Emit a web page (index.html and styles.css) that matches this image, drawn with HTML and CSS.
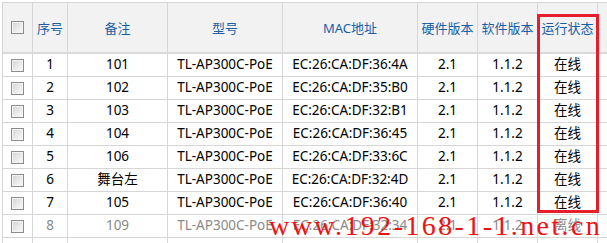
FILE: index.html
```html
<!DOCTYPE html>
<html lang="zh">
<head>
<meta charset="utf-8">
<title>AP列表</title>
<link rel="stylesheet" href="styles.css">
</head>
<body>
<div class="wrap">
  <div class="grid">
    <div class="row head">
      <div class="cell"><span class="cb"></span></div>
      <div class="cell">序号</div>
      <div class="cell">备注</div>
      <div class="cell">型号</div>
      <div class="cell">MAC地址</div>
      <div class="cell">硬件版本</div>
      <div class="cell">软件版本</div>
      <div class="cell">运行状态</div>
      <div class="cell"></div>
    </div>
    <div class="row">
      <div class="cell"><span class="cb"></span></div>
      <div class="cell">1</div><div class="cell">101</div><div class="cell">TL-AP300C-PoE</div><div class="cell">EC:26:CA:DF:36:4A</div><div class="cell">2.1</div><div class="cell">1.1.2</div><div class="cell">在线</div><div class="cell"></div>
    </div>
    <div class="row">
      <div class="cell"><span class="cb"></span></div>
      <div class="cell">2</div><div class="cell">102</div><div class="cell">TL-AP300C-PoE</div><div class="cell">EC:26:CA:DF:35:B0</div><div class="cell">2.1</div><div class="cell">1.1.2</div><div class="cell">在线</div><div class="cell"></div>
    </div>
    <div class="row">
      <div class="cell"><span class="cb"></span></div>
      <div class="cell">3</div><div class="cell">103</div><div class="cell">TL-AP300C-PoE</div><div class="cell">EC:26:CA:DF:32:B1</div><div class="cell">2.1</div><div class="cell">1.1.2</div><div class="cell">在线</div><div class="cell"></div>
    </div>
    <div class="row">
      <div class="cell"><span class="cb"></span></div>
      <div class="cell">4</div><div class="cell">104</div><div class="cell">TL-AP300C-PoE</div><div class="cell">EC:26:CA:DF:36:45</div><div class="cell">2.1</div><div class="cell">1.1.2</div><div class="cell">在线</div><div class="cell"></div>
    </div>
    <div class="row">
      <div class="cell"><span class="cb"></span></div>
      <div class="cell">5</div><div class="cell">106</div><div class="cell">TL-AP300C-PoE</div><div class="cell">EC:26:CA:DF:33:6C</div><div class="cell">2.1</div><div class="cell">1.1.2</div><div class="cell">在线</div><div class="cell"></div>
    </div>
    <div class="row">
      <div class="cell"><span class="cb"></span></div>
      <div class="cell">6</div><div class="cell">舞台左</div><div class="cell">TL-AP300C-PoE</div><div class="cell">EC:26:CA:DF:32:4D</div><div class="cell">2.1</div><div class="cell">1.1.2</div><div class="cell">在线</div><div class="cell"></div>
    </div>
    <div class="row">
      <div class="cell"><span class="cb"></span></div>
      <div class="cell">7</div><div class="cell">105</div><div class="cell">TL-AP300C-PoE</div><div class="cell">EC:26:CA:DF:36:40</div><div class="cell">2.1</div><div class="cell">1.1.2</div><div class="cell">在线</div><div class="cell"></div>
    </div>
    <div class="row off">
      <div class="cell"><span class="cb"></span></div>
      <div class="cell">8</div><div class="cell">109</div><div class="cell">TL-AP300C-PoE</div><div class="cell">EC:26:CA:DF:32:34</div><div class="cell">2.1</div><div class="cell">1.1.2</div><div class="cell">离线</div><div class="cell"></div>
    </div>
    <div class="row">
      <div class="cell"></div><div class="cell"></div><div class="cell"></div><div class="cell"></div><div class="cell"></div><div class="cell"></div><div class="cell"></div><div class="cell"></div><div class="cell"></div>
    </div>
  </div>
  <div class="mark"></div>
  <div class="watermark">www.192-168-1-1.net.cn</div>
</div>
</body>
</html>
```
FILE: styles.css
```css
html, body {
  margin: 0;
  padding: 0;
  background: #fff;
  overflow: hidden;
}
.wrap {
  position: relative;
  padding: 2px 0 0 2px;
  width: 605px;
  height: 241px;
  overflow: hidden;
}
.grid {
  border-top: 1px solid #d6d6d6;
  border-left: 1px solid #d6d6d6;
  width: 680px;
  font-family: "Noto Sans", "Noto Sans CJK SC", sans-serif;
  font-size: 13.5px;
  color: #000;
}
.row {
  display: grid;
  grid-template-columns: 30px 35px 100px 115px 135px 60px 60px 60px 60px;
  height: 23px;
}
.cell {
  box-sizing: border-box;
  border-right: 1px solid #d6d6d6;
  border-bottom: 1px solid #d6d6d6;
  display: flex;
  align-items: center;
  justify-content: center;
  white-space: nowrap;
  overflow: hidden;
  line-height: 1;
}
.row.head {
  height: 51px;
  background: #f2f2f2;
}
.row.head .cell {
  border-bottom: 2px solid #d9d9d9;
  color: #1a5ea6;
  font-size: 13px;
  padding-top: 1px;
}
.row.off .cell {
  color: #8a8a8a;
}
.cb {
  display: block;
  width: 11px;
  height: 11px;
  border: 1px solid #8c8c8c;
  background: linear-gradient(135deg, #d2d2d2 0%, #e8e8e8 50%, #fbfbfb 100%);
  box-shadow: inset 0 0 0 1px #f4f4f4;
}
.row.head .cb {
  margin-top: -1px;
}
.mark {
  position: absolute;
  left: 537px;
  top: 14px;
  width: 62px;
  height: 199px;
  box-sizing: border-box;
  border: 3px solid #e61e2b;
}
.watermark {
  position: absolute;
  left: 269px;
  top: 212px;
  font-family: "Liberation Serif", serif;
  font-size: 28px;
  letter-spacing: 2.4px;
  color: #f01010;
  line-height: 1;
  white-space: nowrap;
}
```
